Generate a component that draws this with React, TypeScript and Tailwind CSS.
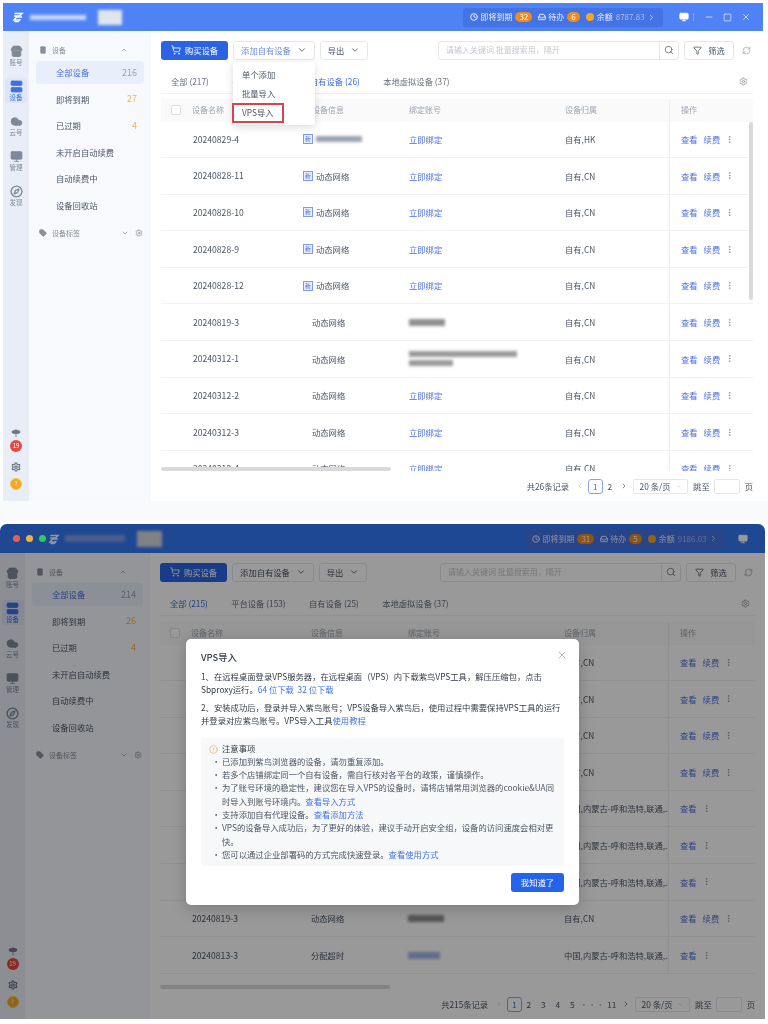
import type { ReactNode } from "react"
import {
  ChevronDown,
  ChevronLeft,
  ChevronRight,
  ChevronUp,
  CircleAlert,
  Clock,
  Cloud,
  Compass,
  EllipsisVertical,
  Funnel,
  Inbox,
  Minus,
  Monitor,
  RefreshCw,
  Search,
  Server,
  Settings,
  ShoppingCart,
  Signpost,
  Smartphone,
  Square,
  Store,
  Tag,
  X,
} from "lucide-react"

type Row = {
  name: string
  info: string
  tagged?: boolean
  blurInfo?: boolean
  account: "bind" | "blur" | "blurLong" | "blurBlue"
  owner: string
  renew?: boolean
}

const proxyOwner = "中国,内蒙古-呼和浩特,联通,.."

const rowsTop: Row[] = [
  { name: "20240829-4", info: "", tagged: true, blurInfo: true, account: "bind", owner: "自有,HK", renew: true },
  { name: "20240828-11", info: "动态网络", tagged: true, account: "bind", owner: "自有,CN", renew: true },
  { name: "20240828-10", info: "动态网络", tagged: true, account: "bind", owner: "自有,CN", renew: true },
  { name: "20240828-9", info: "动态网络", tagged: true, account: "bind", owner: "自有,CN", renew: true },
  { name: "20240828-12", info: "动态网络", tagged: true, account: "bind", owner: "自有,CN", renew: true },
  { name: "20240819-3", info: "动态网络", account: "blur", owner: "自有,CN", renew: true },
  { name: "20240312-1", info: "动态网络", account: "blurLong", owner: "自有,CN", renew: true },
  { name: "20240312-2", info: "动态网络", account: "bind", owner: "自有,CN", renew: true },
  { name: "20240312-3", info: "动态网络", account: "bind", owner: "自有,CN", renew: true },
  { name: "20240312-4", info: "动态网络", account: "bind", owner: "自有,CN", renew: true },
]

const rowsBottom: Row[] = [
  { name: "20240829-4", info: "动态网络", account: "blur", owner: "自有,CN", renew: true },
  { name: "20240828-11", info: "动态网络", account: "blur", owner: "自有,CN", renew: true },
  { name: "20240828-10", info: "动态网络", account: "blur", owner: "自有,CN", renew: true },
  { name: "20240828-9", info: "动态网络", account: "blur", owner: "自有,CN", renew: true },
  { name: "20240828-12", info: "动态网络", account: "blur", owner: proxyOwner },
  { name: "20240826-1", info: "动态网络", account: "blur", owner: proxyOwner },
  { name: "20240826-2", info: "动态网络", account: "blur", owner: proxyOwner },
  { name: "20240819-3", info: "动态网络", account: "blur", owner: "自有,CN", renew: true },
  { name: "20240813-3", info: "分配超时", account: "blurBlue", owner: proxyOwner },
]

function Blur({ className }: { className: string }) {
  return <div className={`blur-[1.5px] ${className}`} />
}

function RailItem({ icon, label, active }: { icon: ReactNode; label: string; active?: boolean }) {
  return (
    <div
      className={`flex h-[25px] w-[22px] flex-col items-center justify-center rounded-[3px] ${
        active ? "bg-[#dde5f7] text-[#3f6fe0]" : "text-[#7f8898]"
      }`}
    >
      {icon}
      <span className="text-[6.5px] leading-[9px]">{label}</span>
    </div>
  )
}

function Rail({ width }: { width: string }) {
  return (
    <div className={`flex shrink-0 flex-col items-center bg-[#e9edf7] pt-[12px] pb-[11px] ${width}`}>
      <div className="flex flex-col items-center gap-[10px]">
        <RailItem icon={<Store size={13} fill="currentColor" strokeWidth={1.5} />} label="账号" />
        <RailItem active icon={<Server size={13} fill="currentColor" strokeWidth={1.5} />} label="设备" />
        <RailItem icon={<Cloud size={13} fill="currentColor" strokeWidth={1.5} />} label="云号" />
        <RailItem icon={<Monitor size={13} fill="currentColor" strokeWidth={1.5} />} label="管理" />
        <RailItem icon={<Compass size={13} strokeWidth={2.5} />} label="发现" />
      </div>
      <div className="mt-auto flex flex-col items-center text-[#6f7686]">
        <Signpost size={10} fill="currentColor" />
        <div className="mt-[2px] flex h-[12px] w-[12px] items-center justify-center rounded-full bg-[#e5483f] text-[6px] leading-none text-white">
          19
        </div>
        <Settings size={10} strokeWidth={3} className="mt-[10px]" />
        <div className="mt-[6px] flex h-[12px] w-[12px] items-center justify-center rounded-full border border-[#f6c445] bg-[#f5a623] text-[6px] leading-none text-white">
          ?
        </div>
      </div>
    </div>
  )
}

function SubNav({ width, total, expiring, tx }: { width: string; total: string; expiring: string; tx: string }) {
  const items = [
    { label: "全部设备", count: total, active: true },
    { label: "即将到期", count: expiring, warn: true },
    { label: "已过期", count: "4", warn: true },
    { label: "未开启自动续费" },
    { label: "自动续费中" },
    { label: "设备回收站" },
  ]
  return (
    <div className={`flex shrink-0 flex-col bg-[#f7f9fd] pt-[13px] text-[#4b5563] ${width}`}>
      <div className={`flex h-[12px] items-center justify-between pr-[23px] text-[7px] text-[#8a8f99] ${tx}`}>
        <span className="flex items-center gap-[5px]">
          <Smartphone size={8} fill="currentColor" />
          设备
        </span>
        <ChevronUp size={8} />
      </div>
      <div className="mt-[3px] flex flex-col px-[7px]">
        {items.map((item) => (
          <div key={item.label} className="flex h-[26.5px] items-center">
            <div
              className={`flex h-[23px] flex-1 items-center justify-between rounded-[4px] pr-[7px] pl-[20px] text-[8.3px] ${
                item.active ? "bg-[#e9eefb] text-[#4a6fe0]" : ""
              }`}
            >
              <span>{item.label}</span>
              <span className={`text-[9px] ${item.warn ? "text-[#f0b35a]" : "text-[#9aa1ad]"}`}>{item.count}</span>
            </div>
          </div>
        ))}
      </div>
      <div className={`mt-[9px] flex h-[12px] items-center justify-between pr-[8px] text-[7px] text-[#8a8f99] ${tx}`}>
        <span className="flex items-center gap-[5px]">
          <Tag size={8} fill="currentColor" />
          设备标签
        </span>
        <span className="flex items-center gap-[6px]">
          <ChevronDown size={8} />
          <Settings size={8} />
        </span>
      </div>
    </div>
  )
}

function TableRow({ row }: { row: Row }) {
  return (
    <div className="grid h-[36.6px] shrink-0 grid-cols-[142px_106px_156px_104px_1fr] border-b border-[#f1f2f4] text-[8.3px] text-[#4b5563]">
      <div className="flex items-center pl-[32px] text-[8.6px]">{row.name}</div>
      <div className="flex items-center">
        {row.tagged ? (
          <span className="mr-[3px] flex h-[10px] w-[10px] items-center justify-center border border-[#7f9be8] bg-[#e8eefc] text-[6px] leading-none text-[#4a6fe0]">
            新
          </span>
        ) : (
          <span className="w-[9px]" />
        )}
        {row.blurInfo ? <Blur className="h-[6px] w-[46px] bg-[#9aa3b2]" /> : row.info}
      </div>
      <div className="flex items-center text-[#4a6fe0]">
        {row.account === "bind" && "立即绑定"}
        {row.account === "blur" && <Blur className="h-[7px] w-[36px] bg-[#8f8f8f]" />}
        {row.account === "blurBlue" && <Blur className="h-[7px] w-[32px] bg-[#9db6ea]" />}
        {row.account === "blurLong" && (
          <div className="flex flex-col gap-[3px]">
            <Blur className="h-[6px] w-[108px] bg-[#9a9a9a]" />
            <Blur className="h-[6px] w-[44px] bg-[#9a9a9a]" />
          </div>
        )}
      </div>
      <div className="flex items-center whitespace-nowrap">{row.owner}</div>
      <div className="flex items-center border-l border-[#eeeff2] pl-[11px] text-[#4a6fe0] shadow-[-2px_0_3px_rgba(0,0,0,0.02)]">
        <span>查看</span>
        {row.renew && <span className="ml-[6px]">续费</span>}
        <EllipsisVertical size={9} className="ml-[5px] text-[#8b8f97]" />
      </div>
    </div>
  )
}

function ToolButton({ children, className }: { children: ReactNode; className?: string }) {
  return (
    <div
      className={`flex h-[19px] items-center justify-center gap-[6px] rounded-[3px] border border-[#e5e7eb] bg-white text-[8.3px] text-[#4b5563] ${className ?? ""}`}
    >
      {children}
    </div>
  )
}

function MainPanel({
  tabs,
  activeTab,
  rows,
  pager,
  total,
  showMenu,
  tableTop,
  vbar,
}: {
  tabs: string[]
  activeTab: number
  rows: Row[]
  pager: string[]
  total: string
  showMenu?: boolean
  tableTop: string
  vbar?: boolean
}) {
  return (
    <div className="flex min-w-0 flex-1 flex-col bg-white px-[10px] pt-[9.5px]">
      {/* toolbar */}
      <div className="flex items-center">
        <div className="flex h-[19px] w-[67px] items-center justify-center gap-[4px] rounded-[3px] bg-[#2b63e3] text-[8.3px] text-white">
          <ShoppingCart size={10} />
          购买设备
        </div>
        <div className="relative ml-[5px]">
          <ToolButton className={`w-[82px] ${showMenu ? "border-[#9db4ee] text-[#6d8ce0]" : ""}`}>
            添加自有设备
            <ChevronDown size={10} className="text-[#4b5563]" />
          </ToolButton>
          {showMenu && (
            <div className="absolute top-full left-0 z-10 mt-[2px] flex h-[63px] w-[82px] flex-col rounded-[3px] bg-white pt-[3px] text-[8.3px] text-[#4b5563] shadow-[0_2px_8px_rgba(0,0,0,0.15)]">
              <div className="flex h-[19px] items-center pl-[9px]">单个添加</div>
              <div className="flex h-[19px] items-center pl-[9px]">批量导入</div>
              <div className="-ml-[1px] flex h-[20px] w-[52px] items-center border-2 border-[#d8434e] pl-[8px]">VPS导入</div>
            </div>
          )}
        </div>
        <ToolButton className="ml-[5px] w-[48px]">
          导出
          <ChevronDown size={10} />
        </ToolButton>
        <div className="ml-auto flex h-[19px] w-[241px] items-center rounded-[3px] border border-[#e5e7eb] bg-white">
          <span className="flex-1 pl-[7px] text-[8px] text-[#c4c7cd]">请输入关键词 批量搜索用，隔开</span>
          <span className="flex h-full w-[19px] items-center justify-center border-l border-[#e5e7eb] text-[#6b7280]">
            <Search size={10} />
          </span>
        </div>
        <ToolButton className="ml-[5px] w-[50px]">
          <Funnel size={9} />
          筛选
        </ToolButton>
        <RefreshCw size={9} className="mr-[2px] ml-[8px] text-[#a3a8b0]" />
      </div>

      {/* tabs */}
      <div className="mt-[10px] flex h-[24px] items-center gap-[23.3px] border-b border-[#f1f2f4] pl-[10px] text-[8.3px] text-[#6b7280]">
        {tabs.map((tab, i) => (
          <span key={tab} className={i === activeTab ? "text-[#3f6fe0]" : ""}>
            {tab}
          </span>
        ))}
        <Settings size={9} className="mr-[5px] ml-auto text-[#8b8f97]" />
      </div>

      {/* table */}
      <div className={`relative flex min-h-0 flex-1 flex-col overflow-hidden ${tableTop}`}>
        <div className="grid h-[23px] shrink-0 grid-cols-[142px_106px_156px_104px_1fr] rounded-t-[3px] bg-[#fafafa] text-[8px] text-[#9ca3af]">
          <div className="flex items-center pl-[10px]">
            <span className="mr-[11px] h-[10px] w-[10px] rounded-[2px] border border-[#dcdfe4] bg-white" />
            设备名称
          </div>
          <div className="flex items-center pl-[9px]">设备信息</div>
          <div className="flex items-center">绑定账号</div>
          <div className="flex items-center">设备归属</div>
          <div className="flex items-center border-l border-[#eeeff2] pl-[11px]">操作</div>
        </div>
        {rows.map((row) => (
          <TableRow key={row.name} row={row} />
        ))}
        {vbar && <div className="absolute top-[23px] right-0 h-[178px] w-[4px] rounded-full bg-[#d9d9d9]" />}
        <div className="absolute bottom-0 left-0 h-[4px] w-[230px] rounded-full bg-[#d9d9d9]" />
      </div>

      {/* pagination */}
      <div className="flex h-[30px] shrink-0 items-center justify-end text-[8.3px] text-[#4b5563]">
        <span>{total}</span>
        <ChevronLeft size={8} className="mr-[4px] ml-[7px] text-[#c4c7cd]" />
        {pager.map((p, i) => (
          <span
            key={p}
            className={`flex h-[15px] items-center justify-center ${
              p === "···" ? "min-w-[22.5px] text-[#9ca3af]" : "min-w-[14.5px]"
            } ${i === 0 ? "rounded-[3px] border border-[#8aa3e0] text-[#4a6fe0]" : ""}`}
          >
            {p}
          </span>
        ))}
        <ChevronRight size={8} className="mr-[5px] ml-[3px]" />
        <span className="flex h-[15px] w-[55px] items-center justify-center gap-[4px] rounded-[2px] border border-[#e5e7eb]">
          20 条/页
          <ChevronDown size={7} className="text-[#c4c7cd]" />
        </span>
        <span className="mr-[4px] ml-[5px]">跳至</span>
        <span className="h-[15px] w-[26px] rounded-[2px] border border-[#e5e7eb]" />
        <span className="ml-[5px]">页</span>
      </div>
    </div>
  )
}

function HeaderStats({ expiring, todo, balance }: { expiring: string; todo: string; balance: string }) {
  return (
    <div className="flex h-[19px] w-[200px] items-center justify-center gap-[6px] rounded-[3px] bg-[#4473e6] text-[8px] text-[#e6edff]">
      <span className="flex items-center gap-[2px]">
        <Clock size={8} strokeWidth={3} />
        即将到期
        <span className="ml-[1px] rounded-full bg-[#f08c1c] px-[4px] text-[8px] leading-[10px] text-white">{expiring}</span>
      </span>
      <span className="flex items-center gap-[2px]">
        <Inbox size={8} strokeWidth={3} />
        待办
        <span className="ml-[1px] rounded-full bg-[#f08c1c] px-[4px] text-[8px] leading-[10px] text-white">{todo}</span>
      </span>
      <span className="flex items-center gap-[2px]">
        <span className="mr-[1px] h-[8px] w-[8px] rounded-full bg-[#f5a623]" />
        余额
        <span className="ml-[1px] text-[#a9bdf2]">{balance}</span>
        <ChevronRight size={9} />
      </span>
    </div>
  )
}

function Logo() {
  return (
    <svg width="12" height="12" viewBox="0 0 12 12" fill="none" stroke="white" strokeWidth="1.5" strokeLinecap="round">
      <path d="M3 2.5h7L7.5 5H2.5" />
      <path d="M9.5 6H4.5L2 9h5" />
      <path d="M8 8.5 6 10.5H3" />
    </svg>
  )
}

function UsageModal() {
  const link = "text-[#3f73e6]"
  return (
    <div className="relative flex h-[266px] w-[393px] flex-col rounded-[5px] bg-white px-[15px] pt-[12px] text-[8.33px] leading-[13.3px] text-[#333a45] shadow-[0_4px_16px_rgba(0,0,0,0.2)]">
      <X size={12} strokeWidth={1.5} className="absolute top-[10px] right-[11px] text-[#9ca3af]" />
      <div className="text-[9.4px] font-medium">VPS导入</div>
      <p className="mt-[6px]">
        1、在远程桌面登录VPS服务器，在远程桌面（VPS）内下载紫鸟VPS工具，解压压缩包，点击Sbproxy运行。
        <span className={link}>64 位下载&nbsp;&nbsp;32 位下载</span>
      </p>
      <p className="mt-[4.5px]">
        2、安装成功后，登录并导入紫鸟账号；VPS设备导入紫鸟后，使用过程中需要保持VPS工具的运行并登录对应紫鸟账号。VPS导入工具
        <span className={link}>使用教程</span>
      </p>
      <div className="mt-[11px] h-[128px] rounded-[3px] bg-[#f7f8fa] pt-[4px] pr-[8px] pl-[8px] text-[#4b5563]">
        <div className="flex items-center gap-[4px] text-[#333a45]">
          <CircleAlert size={9} className="text-[#f0b35a]" />
          注意事项
        </div>
        <ul className="-mt-[1px] list-none">
          {[
            <>已添加到紫鸟浏览器的设备，请勿重复添加。</>,
            <>若多个店铺绑定同一个自有设备，需自行核对各平台的政策，谨慎操作。</>,
            <>
              为了账号环境的稳定性，建议您在导入VPS的设备时，请将店铺常用浏览器的cookie&UA同时导入到账号环境内。
              <span className={link}>查看导入方式</span>
            </>,
            <>
              支持添加自有代理设备。<span className={link}>查看添加方法</span>
            </>,
            <>VPS的设备导入成功后，为了更好的体验，建议手动开启安全组，设备的访问速度会相对更快。</>,
            <>
              您可以通过企业部署码的方式完成快速登录。<span className={link}>查看使用方式</span>
            </>,
          ].map((text, i) => (
            <li key={i} className="flex">
              <span className="w-[13px] shrink-0 pl-[3px]">•</span>
              <span>{text}</span>
            </li>
          ))}
        </ul>
      </div>
      <div className="mt-[7px] flex justify-end">
        <div className="flex h-[19px] w-[53px] items-center justify-center rounded-[3px] bg-[#2563eb] text-white">我知道了</div>
      </div>
    </div>
  )
}

export default function App() {
  return (
    <div className="flex h-[1024px] w-[768px] flex-col overflow-hidden bg-white font-['Noto_Sans_CJK_SC','Noto_Sans',sans-serif] blur-[0.5px]">
      {/* top window */}
      <div className="mt-[3px] ml-[3px] flex h-[498px] w-[760px] shrink-0 flex-col overflow-hidden">
        <div className="flex h-[28px] shrink-0 items-center bg-[#4f83f5] text-white">
          <span className="ml-[9px]">
            <Logo />
          </span>
          <Blur className="ml-[6px] h-[5px] w-[56px] bg-[#c9d9fb]" />
          <Blur className="ml-[12px] h-[15px] w-[24px] bg-[#dfe5ee]" />
          <div className="ml-auto">
            <HeaderStats expiring="32" todo="6" balance="8787.83" />
          </div>
          <Monitor size={10} fill="currentColor" className="ml-[16px]" />
          <span className="ml-[4px] h-[8px] w-px bg-white/30" />
          <Minus size={10} className="ml-[10px] text-[#d6e2fd]" />
          <Square size={9} className="ml-[8.5px] text-[#d6e2fd]" />
          <X size={10} className="mr-[12px] ml-[9.5px] text-[#d6e2fd]" />
        </div>
        <div className="flex min-h-0 flex-1">
          <Rail width="w-[26px]" />
          <SubNav width="w-[122px]" total="216" expiring="27" tx="pl-[10px]" />
          <MainPanel
            tabs={["全部 (217)", "平台设备 (153)", "自有设备 (26)", "本地虚拟设备 (37)"]}
            activeTab={2}
            rows={rowsTop}
            pager={["1", "2"]}
            total="共26条记录"
            showMenu
            tableTop="mt-[5px]"
            vbar
          />
        </div>
      </div>

      <div className="h-[20px] w-full shrink-0 bg-[#f9fafb]" />
      <div className="h-[3px] w-full shrink-0" />

      {/* bottom window, dimmed with dialog open */}
      <div className="relative flex h-[495px] w-[765px] shrink-0 flex-col overflow-hidden rounded-t-[7px]">
        <div className="flex h-[29px] shrink-0 items-center bg-[#3478f6] text-white">
          <span className="relative z-20 ml-[13px] flex gap-[6px]">
            <span className="h-[7px] w-[7px] rounded-full bg-[#ef5b4e]" />
            <span className="h-[7px] w-[7px] rounded-full bg-[#f5b13b]" />
            <span className="h-[7px] w-[7px] rounded-full bg-[#33c95a]" />
          </span>
          <span className="ml-[2px]">
            <Logo />
          </span>
          <Blur className="ml-[5px] h-[7px] w-[60px] bg-[#7f9fe6]" />
          <Blur className="ml-[12px] h-[16px] w-[25px] bg-[#d5d9df]" />
          <div className="ml-auto">
            <HeaderStats expiring="31" todo="5" balance="9186.03" />
          </div>
          <Monitor size={10} fill="currentColor" className="mr-[17px] ml-[13px]" />
        </div>
        <div className="flex min-h-0 flex-1">
          <Rail width="w-[25px]" />
          <SubNav width="w-[125px]" total="214" expiring="26" tx="pl-[11px]" />
          <MainPanel
            tabs={["全部 (215)", "平台设备 (153)", "自有设备 (25)", "本地虚拟设备 (37)"]}
            activeTab={0}
            rows={rowsBottom}
            pager={["1", "2", "3", "4", "5", "···", "11"]}
            total="共215条记录"
            tableTop="mt-[6px]"
          />
        </div>
        <div className="absolute inset-0 z-10 flex items-center justify-center bg-black/40">
          <UsageModal />
        </div>
      </div>
    </div>
  )
}
